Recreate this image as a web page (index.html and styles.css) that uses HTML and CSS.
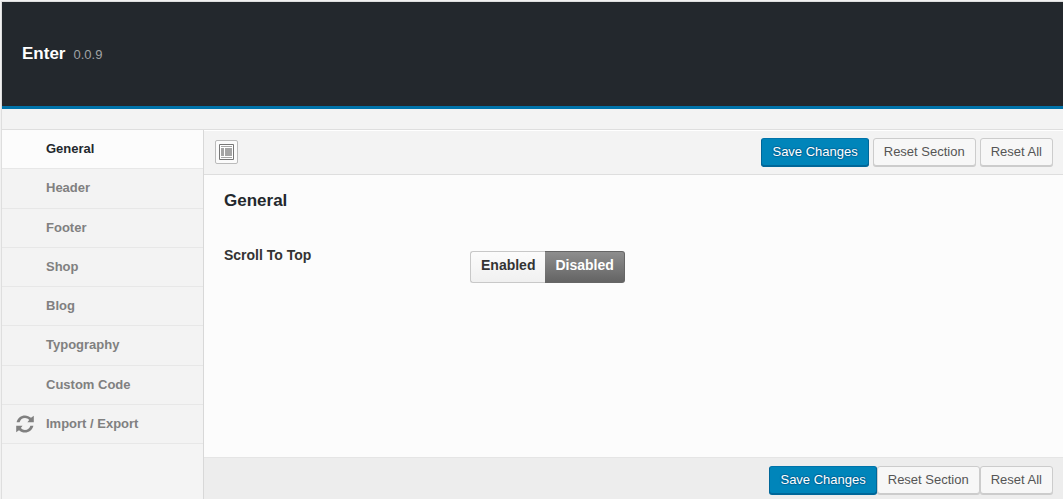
FILE: index.html
```html
<!DOCTYPE html>
<html lang="en">
<head>
<meta charset="utf-8">
<meta name="viewport" content="width=device-width, initial-scale=1">
<title>Enter – General</title>
<link rel="stylesheet" href="styles.css">
</head>
<body>
<form class="panel">
  <header class="panel-header">
    <h1 class="theme-name">Enter</h1>
    <span class="theme-version">0.0.9</span>
  </header>
  <div class="intro"></div>
  <div class="columns">
    <nav class="sidebar">
      <ul class="menu">
        <li class="menu-item active"><a class="menu-link" href="#general">General</a></li>
        <li class="menu-item"><a class="menu-link" href="#header">Header</a></li>
        <li class="menu-item"><a class="menu-link" href="#footer">Footer</a></li>
        <li class="menu-item"><a class="menu-link" href="#shop">Shop</a></li>
        <li class="menu-item"><a class="menu-link" href="#blog">Blog</a></li>
        <li class="menu-item"><a class="menu-link" href="#typography">Typography</a></li>
        <li class="menu-item"><a class="menu-link" href="#code">Custom Code</a></li>
        <li class="menu-item"><a class="menu-link has-icon" href="#import">
          <svg class="menu-icon" viewBox="0 0 18 18" aria-hidden="true">
            <path d="M.6 7.200C1.500 3 5 .4 9 .4c2.300 0 4.400.9 6 2.400L17.800.8V7.200H11.400L13.200 4.900C12 3.700 10.600 3 9 3c-2.700 0-4.600 1.600-5.400 4.200z"/>
            <path d="M17.400 10.800C16.500 15 13 17.600 9 17.600c-2.300 0-4.400-.9-6-2.400L.2 17.200V10.800H6.600L4.800 13.100C6 14.300 7.400 15 9 15c2.700 0 4.600-1.600 5.400-4.200z"/>
          </svg>
          Import / Export</a></li>
      </ul>
    </nav>
    <main class="main">
      <div class="toolbar">
        <button class="expand" type="button" aria-label="Expand options">
          <svg class="expand-icon" viewBox="0 0 15 16" aria-hidden="true">
            <path fill="#fff" stroke="#777" d="M.5.5h14v15H.5z"/>
            <path fill="#a5a5a5" d="M2 2h11v1H2zM2 4h3v8H2zM6 4h7v8H6zM2 13h11v1H2z"/>
          </svg>
        </button>
        <div class="actions">
          <button class="button primary" type="submit">Save Changes</button>
          <button class="button" type="button">Reset Section</button>
          <button class="button" type="reset">Reset All</button>
        </div>
      </div>
      <section class="content">
        <h2 class="section-title">General</h2>
        <div class="field">
          <h3 class="field-title" id="scroll-title">Scroll To Top</h3>
          <div class="switch" role="radiogroup" aria-labelledby="scroll-title">
            <input class="switch-input" type="radio" name="scroll" id="scroll-on">
            <label class="switch-label on" for="scroll-on">Enabled</label>
            <input class="switch-input" type="radio" name="scroll" id="scroll-off" checked>
            <label class="switch-label off" for="scroll-off">Disabled</label>
          </div>
        </div>
      </section>
      <footer class="footer">
        <div class="actions joined">
          <button class="button primary" type="submit">Save Changes</button>
          <button class="button" type="button">Reset Section</button>
          <button class="button" type="reset">Reset All</button>
        </div>
      </footer>
    </main>
  </div>
</form>
</body>
</html>
```
FILE: styles.css
```css
* { box-sizing: border-box; }

body {
  margin: 0;
  background: #f1f1f1;
  color: #333;
  font: 13px/20px "Liberation Sans", Arial, sans-serif;
}

h1, h2, h3, ul { margin: 0; padding: 0; }

.panel {
  display: flex;
  flex-direction: column;
  min-height: 100vh;
  padding-left: 1px;
}

.panel-header {
  display: flex;
  align-items: baseline;
  gap: 8px;
  height: 108px;
  margin-top: 1px;
  padding: 42px 20px 0;
  border-top: 1px solid #dedede;
  border-left: 1px solid #dedede;
  background: #23282d;
  box-shadow: inset 0 -3px #0073aa;
}

.theme-name {
  color: #fff;
  font-size: 17px;
  line-height: 20px;
}

.theme-version { color: #a0a3a6; }

.intro {
  height: 21px;
  border-left: 1px solid #dedede;
  border-bottom: 1px solid #dedede;
  background: #f3f3f3;
}

.columns {
  display: flex;
  flex: 1;
}

.sidebar {
  flex: none;
  width: 203px;
  border-left: 1px solid #dedede;
  border-right: 1px solid #d8d8d8;
  background: #f4f4f4;
}

.menu {
  display: grid;
  grid-auto-rows: 1fr;
  height: 314px;
  list-style: none;
}

.menu-item {
  border-bottom: 1px solid #e7e7e7;
  background: #f3f3f3;
}

.menu-item.active { background: #fcfcfc; }

.menu-link {
  display: flex;
  align-items: center;
  height: 100%;
  padding-left: 44px;
  color: #808080;
  font-weight: bold;
  text-decoration: none;
}

.menu-link.has-icon {
  gap: 12px;
  padding-left: 14px;
}

.active .menu-link { color: #23282d; }

.menu-icon {
  width: 18px;
  height: 18px;
  fill: #808080;
}

.main {
  display: flex;
  flex: 1;
  flex-direction: column;
  min-width: 0;
}

.toolbar {
  display: flex;
  align-items: flex-start;
  justify-content: space-between;
  padding: 7px 10px 8px 11px;
  border-top: 1px solid #fff;
  border-bottom: 1px solid #dedede;
  background: #f3f3f3;
}

.expand {
  display: grid;
  place-items: center;
  width: 23px;
  height: 24px;
  margin-top: 2px;
  padding: 0;
  border: 1px solid #bbb;
  border-radius: 2px;
  background: #fbfbfb;
}

.expand-icon {
  width: 15px;
  height: 16px;
}

.actions {
  display: flex;
  gap: 4px;
}

.actions.joined { gap: 0; }

.button {
  height: 28px;
  padding: 0 10px;
  border: 1px solid #ccc;
  border-radius: 3px;
  background: #f7f7f7;
  box-shadow: 0 1px #ccc;
  color: #555;
  font: inherit;
}

.button.primary {
  border-color: #0073aa #006799 #006799;
  background: #0085ba;
  box-shadow: 0 1px #006799;
  color: #fff;
  text-shadow: 0 -1px 1px #006799, 1px 0 1px #006799, 0 1px 1px #006799, -1px 0 1px #006799;
}

.content {
  flex: 1;
  padding: 16px 20px;
  background: #fcfcfc;
}

.section-title {
  color: #23282d;
  font-size: 17px;
  line-height: 20px;
}

.field {
  display: flex;
  padding-top: 34px;
}

.field-title {
  width: 246px;
  font-size: 14px;
  line-height: 20px;
}

.switch {
  display: flex;
  padding-top: 6px;
}

.switch-input {
  position: absolute;
  opacity: 0;
  pointer-events: none;
}

.switch-label {
  height: 32px;
  padding: 3px 10px 0;
  border: 1px solid #c8c8c8;
  background: linear-gradient(#fcfcfc, #f0f0f0);
  font-size: 14px;
  font-weight: bold;
}

.switch-label.on {
  border-right: 0;
  border-radius: 3px 0 0 3px;
}

.switch-label.off {
  border-left: 0;
  border-radius: 0 3px 3px 0;
}

.switch-input:checked + .switch-label {
  border-color: #666;
  background: linear-gradient(#8e8e8e, #646464);
  color: #fff;
}

.footer {
  display: flex;
  justify-content: flex-end;
  padding: 8px 10px 5px;
  border-top: 1px solid #e5e5e5;
  background: #ededed;
}
```
